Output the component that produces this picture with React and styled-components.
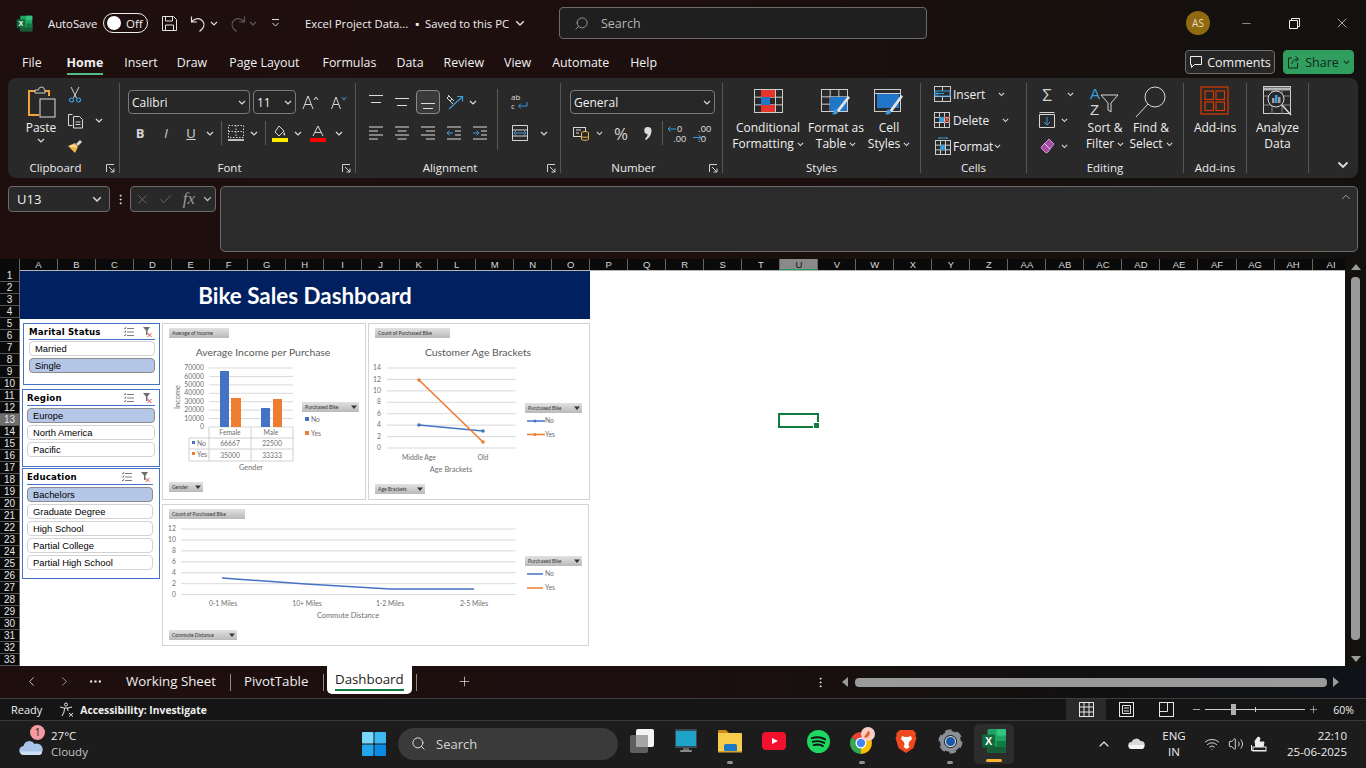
import React from "react";
import styled, { createGlobalStyle } from "styled-components";
import { Search, Minus, X, Check, Wifi, Volume2, ChevronUp, Plus, ChevronLeft, ChevronRight, MoreHorizontal, MoreVertical } from "lucide-react";

const UI = '"Open Sans", "Noto Sans", sans-serif';
const LINE = "#d4d4d4";
const BLUE = "#3b9bdc";

const GlobalStyle = createGlobalStyle`
  html, body { margin: 0; padding: 0; background: #111; overflow: hidden; }
  * { box-sizing: border-box; }
  svg { flex: none; overflow: visible; }
`;

const Page = styled.div`
  width: 1366px;
  height: 768px;
  display: flex;
  flex-direction: column;
  overflow: hidden;
  font-family: ${UI};
  color: #f0f0f0;
  background: linear-gradient(90deg, #1f0e0e, #1e0f0f 45%, #17100d 75%, #13110f);
`;

/* title bar */
const TitleBar = styled.div`
  height: 46px;
  flex: none;
  display: flex;
  align-items: center;
  padding-left: 16px;
`;
const BarText = styled.span`
  flex: none;
  width: ${(p) => p.$w}px;
  font-size: 11.3px;
  white-space: nowrap;
  margin-left: ${(p) => p.$ml || 0}px;
`;
const Toggle = styled.div`
  width: 45px;
  height: 20px;
  flex: none;
  border: 1px solid #eee;
  border-radius: 10px;
  display: flex;
  align-items: center;
  padding-left: 3px;
  gap: 5px;
  font-size: 11.5px;
  &::before {
    content: "";
    width: 14px;
    height: 14px;
    border-radius: 50%;
    background: #fff;
  }
`;
const Slot = styled.div`
  width: ${(p) => p.$w}px;
  height: ${(p) => p.$h || 22}px;
  flex: none;
  display: flex;
  align-items: center;
  justify-content: center;
  padding-right: ${(p) => p.$pr || 0}px;
  color: ${(p) => p.$color || LINE};
  font-size: ${(p) => p.$size || 12}px;
`;
const SearchBox = styled.div`
  width: 368px;
  height: 32px;
  margin-left: 29px;
  flex: none;
  display: flex;
  align-items: center;
  padding-left: 14px;
  gap: 12px;
  background: #1f1f1f;
  border: 1px solid #6b6b6b;
  border-radius: 4px;
  font-size: 12.5px;
  color: #b5b5b5;
`;
const Avatar = styled.div`
  width: 24px;
  height: 24px;
  margin-left: 259px;
  flex: none;
  border-radius: 50%;
  background: #8f6a10;
  color: #e8dcc0;
  font-size: 10px;
  display: flex;
  align-items: center;
  justify-content: center;
`;
const WindowButtons = styled.div`
  display: flex;
  margin-left: 12px;
`;

/* tabs row */
const TabRow = styled.div`
  height: 32px;
  flex: none;
  display: flex;
  align-items: center;
  padding: 0 12px 0 22px;
`;
const MenuTab = styled.div`
  position: relative;
  margin-right: ${(p) => p.$mr}px;
  font-size: 12.4px;
  font-weight: ${(p) => (p.$active ? 700 : 400)};
  white-space: nowrap;
  ${(p) =>
    p.$active &&
    `&::after {
      content: "";
      position: absolute;
      left: 0;
      right: 0;
      bottom: -4px;
      height: 2px;
      background: #4fbd86;
    }`}
`;
const RowActions = styled.div`
  margin-left: auto;
  display: flex;
  gap: 8px;
`;
const CommentsButton = styled.div`
  width: 90px;
  height: 24px;
  display: flex;
  align-items: center;
  justify-content: center;
  gap: 4px;
  font-size: 12.5px;
  background: #262626;
  border: 1px solid #6f6f6f;
  border-radius: 4px;
`;
const ShareButton = styled(CommentsButton)`
  width: 71px;
  background: #2f9e5f;
  border-color: #2f9e5f;
  color: #10291b;
`;

/* ribbon */
const Ribbon = styled.div`
  height: 100px;
  flex: none;
  margin: 0 8px;
  padding: 5px 0;
  display: flex;
  background: #292929;
  border-radius: 8px;
`;
const Group = styled.div`
  position: relative;
  width: ${(p) => p.$w}px;
  flex: none;
  display: flex;
  flex-direction: column;
  border-right: 1px solid #555;
`;
const GroupBody = styled.div`
  flex: 1;
  min-height: 0;
  display: flex;
  padding-left: ${(p) => p.$pl || 0}px;
  justify-content: ${(p) => (p.$center ? "center" : "flex-start")};
`;
const GroupLabel = styled.div`
  height: 20px;
  margin-bottom: -5px;
  padding-right: ${(p) => (p.$launch ? 16 : 0)}px;
  font-size: 11.5px;
  text-align: center;
  line-height: 20px;
  color: #ececec;
`;
const Launcher = styled.svg`
  position: absolute;
  right: 4px;
  bottom: 0;
  width: 9px;
  height: 9px;
`;
const Stack = styled.div`
  display: flex;
  flex-direction: column;
  padding-top: ${(p) => p.$top || 0}px;
  gap: ${(p) => p.$gap || 0}px;
`;
const Row = styled.div`
  display: flex;
  align-items: center;
  height: ${(p) => p.$h || 24}px;
`;
const Select = styled.div`
  width: ${(p) => p.$w}px;
  height: 24px;
  margin-left: ${(p) => p.$ml || 0}px;
  padding: 0 3px;
  display: flex;
  align-items: center;
  justify-content: space-between;
  background: #262626;
  border: 1px solid #7a7a7a;
  border-radius: 4px;
  font-size: 12px;
`;
const Divider = styled.div`
  width: 1px;
  height: ${(p) => p.$h || 24}px;
  background: #5a5a5a;
  margin: 0 ${(p) => p.$mx || 2}px;
  flex: none;
`;
const PickedSlot = styled(Slot)`
  border: 1px solid #8a8a8a;
  border-radius: 4px;
  background: #3a3a3a;
  margin: 0 1px;
`;
const PasteButton = styled.div`
  width: 42px;
  margin-left: 12px;
  padding-top: 4px;
  display: flex;
  flex-direction: column;
  align-items: center;
  font-size: 12px;
  line-height: 20px;
`;
const BigButton = styled.div`
  width: ${(p) => p.$w}px;
  flex: none;
  margin-left: ${(p) => p.$ml || 0}px;
  margin-right: ${(p) => p.$mr || 0}px;
  display: flex;
  flex-direction: column;
  align-items: center;
  padding-top: ${(p) => p.$top ?? 6}px;
  white-space: nowrap;
`;
const BigIcon = styled.div`
  height: ${(p) => p.$h || 31}px;
  flex: none;
`;
const BigLine = styled.div`
  height: 16px;
  line-height: 16px;
  font-size: 12px;
  display: flex;
  align-items: center;
  gap: 3px;
`;
const CellLabel = styled.span`
  width: ${(p) => p.$w}px;
  font-size: 12px;
  flex: none;
`;
const RibbonCollapse = styled.div`
  flex: 1;
  display: flex;
  align-items: flex-end;
  justify-content: flex-end;
  padding: 0 9px 5px 0;
`;

/* formula bar */
const FormulaBar = styled.div`
  height: 81px;
  flex: none;
  padding: 8px 8px 7px;
  display: flex;
`;
const NameBox = styled.div`
  width: 102px;
  height: 26px;
  flex: none;
  padding: 0 7px 0 8px;
  display: flex;
  align-items: center;
  justify-content: space-between;
  background: #292929;
  border: 1px solid #6b6b6b;
  border-radius: 4px;
  font-size: 13px;
`;
const FxBox = styled.div`
  width: 86px;
  height: 26px;
  flex: none;
  display: flex;
  align-items: center;
  background: #292929;
  border: 1px solid #6b6b6b;
  border-radius: 4px;
`;
const FxGlyph = styled.span`
  font-family: "Liberation Serif", serif;
  font-style: italic;
  font-size: 17px;
  color: #9a9a9a;
`;
const FormulaInput = styled.div`
  flex: 1;
  margin-left: 4px;
  background: #2b2b2b;
  border: 1px solid #6b6b6b;
  border-radius: 5px;
  display: flex;
  justify-content: flex-end;
  padding: 2px 1px 0 0;
`;

/* sheet */
const SheetArea = styled.div`
  height: 407px;
  flex: none;
  display: flex;
`;
const SheetPane = styled.div`
  width: 1345px;
  flex: none;
  display: flex;
  flex-direction: column;
`;
const ColumnRow = styled.div`
  height: 11px;
  flex: none;
  display: grid;
  grid-template-columns: 20px repeat(35, 38.02px);
  background: #0a0a0a;
  overflow: hidden;
`;
const HeaderCell = styled.div`
  font-family: "Liberation Sans", sans-serif;
  font-size: 9.5px;
  line-height: 11px;
  text-align: center;
  color: ${(p) => (p.$active ? "#111" : "#d9d9d9")};
  background: ${(p) => (p.$active ? "#8a8a8a" : "#0a0a0a")};
  border-right: 1px solid #666;
  box-shadow: ${(p) => (p.$active ? "inset 0 -1px 0 #1f9d5c" : "none")};
`;
const Corner = styled(HeaderCell)`
  background: #0a0a0a;
`;
const SheetBody = styled.div`
  height: 396px;
  display: flex;
  border-top: 1px solid #b5b5b5;
`;
const RowHeaders = styled.div`
  width: 20px;
  flex: none;
  display: grid;
  grid-auto-rows: 12px;
  background: #0a0a0a;
  border-right: 1px solid #666;
  margin-top: -1px;
`;
const RowCell = styled.div`
  font-family: "Liberation Sans", sans-serif;
  font-size: 10px;
  line-height: 12px;
  text-align: center;
  color: #e4e4e4;
  background: ${(p) => (p.$active ? "#6d6d6d" : "#0a0a0a")};
  border-bottom: 1px solid #555;
`;
const Canvas = styled.div`
  position: relative;
  flex: 1;
  background: #fff;
`;
const CellCursor = styled.div`
  position: absolute;
  left: 758px;
  top: 142px;
  width: 41px;
  height: 15px;
  border: 2px solid #107c41;
  &::after {
    content: "";
    position: absolute;
    right: -3px;
    bottom: -3px;
    width: 5px;
    height: 5px;
    background: #107c41;
    border: 1px solid #fff;
  }
`;
const Dashboard = styled.div`
  width: 570px;
`;
const Banner = styled.div`
  height: 48px;
  background: #002060;
  color: #fff;
  font-family: Lato, sans-serif;
  font-weight: 700;
  font-size: 22.4px;
  display: flex;
  align-items: center;
  justify-content: center;
`;
const DashBody = styled.div`
  display: grid;
  grid-template-columns: 140px 1fr;
  column-gap: 2px;
  padding: 4px 0 0 0;
`;
const SlicerColumn = styled.div`
  padding-left: 2px;
  display: flex;
  flex-direction: column;
`;
const Slicer = styled.div`
  width: ${(p) => p.$w}px;
  height: ${(p) => p.$h}px;
  margin: ${(p) => p.$mt || 0}px 0 0 ${(p) => p.$ml || 0}px;
  padding: 0 ${(p) => p.$r}px 0 ${(p) => p.$l}px;
  border: 1px solid #4472c4;
  background: #fff;
`;
const SlicerHead = styled.div`
  height: 16px;
  display: flex;
  align-items: center;
  border-bottom: 1px solid #4472c4;
  color: #000;
  font-family: "DejaVu Sans", sans-serif;
  font-weight: 700;
  font-size: 8.6px;
  letter-spacing: 0.2px;
`;
const SlicerTools = styled.div`
  margin-left: auto;
  display: flex;
  gap: 9px;
  margin-right: 3px;
`;
const SlicerList = styled.div`
  margin-top: ${(p) => p.$top}px;
  display: flex;
  flex-direction: column;
  gap: 2px;
`;
const SlicerItem = styled.div`
  height: 15px;
  padding-left: 5px;
  font-family: "Liberation Sans", sans-serif;
  font-size: 9.4px;
  line-height: 13px;
  color: #000;
  background: ${(p) => (p.$on ? "#b4c7e7" : "#fff")};
  border: 1px solid ${(p) => (p.$on ? "#8c8c8c" : "#d2d2d2")};
  border-radius: 4px;
`;
const ChartGrid = styled.div`
  display: grid;
  grid-template-columns: 204px 222px;
  grid-template-rows: 177px 142px;
  column-gap: 2px;
  row-gap: 4px;
`;
const Card = styled.div`
  grid-column: ${(p) => (p.$wide ? "1 / 3" : "auto")};
  border: 1px solid #d4d4d4;
  background: #fff;
  overflow: hidden;
  width: ${(p) => p.$w}px;
`;
const ChartSvg = styled.svg`
  display: block;
  font-family: Lato, sans-serif;
`;
const ChartTitle = styled.text`
  font-size: 10.4px;
  fill: #595959;
  text-anchor: middle;
`;
const AxisText = styled.text`
  font-size: 6.8px;
  fill: #6f6f6f;
  text-anchor: ${(p) => p.$anchor || "middle"};
`;
const AxisTitle = styled.text`
  font-size: 7.4px;
  fill: #6f6f6f;
  text-anchor: middle;
`;
const FieldText = styled.text`
  font-size: 5px;
  fill: #333;
`;

/* sheet tabs */
const SheetTabs = styled.div`
  height: 32px;
  flex: none;
  display: flex;
  align-items: flex-start;
  padding-left: 15px;
  background: linear-gradient(90deg, #1f0e0e, #1d0f0f 45%, #12100f 75%, #0f1218);
`;
const Tab = styled.div`
  width: ${(p) => p.$w}px;
  height: 28px;
  flex: none;
  padding-left: ${(p) => p.$pl}px;
  font-size: 13.3px;
  line-height: 30px;
  white-space: nowrap;
  display: flex;
`;
const ActiveTab = styled.div`
  position: relative;
  width: 85px;
  height: 28px;
  flex: none;
  margin-left: 3px;
  padding-left: 8px;
  background: #fff;
  color: #222;
  font-size: 13.3px;
  line-height: 26px;
  border-radius: 0 0 5px 5px;
  &::after {
    content: "";
    position: absolute;
    left: 8px;
    width: 69px;
    top: 23px;
    height: 2px;
    background: #107c41;
  }
`;
const TabRule = styled.div`
  width: 1px;
  height: 17px;
  margin-top: 8px;
  flex: none;
  background: #8a8a8a;
`;
const HScroll = styled.div`
  margin-left: auto;
  display: flex;
  align-items: center;
  height: 32px;
  padding-right: 21px;
`;
const HThumb = styled.div`
  width: 472px;
  height: 9px;
  margin: 0 6px 0 3px;
  background: #9a9a9a;
  border-radius: 4px;
`;
const Triangle = styled.div`
  width: 0;
  height: 0;
  ${(p) =>
    p.$dir === "left"
      ? "border-right: 6px solid #9a9a9a; border-top: 5px solid transparent; border-bottom: 5px solid transparent;"
      : p.$dir === "right"
      ? "border-left: 6px solid #9a9a9a; border-top: 5px solid transparent; border-bottom: 5px solid transparent;"
      : p.$dir === "up"
      ? "border-bottom: 6px solid #9a9a9a; border-left: 5px solid transparent; border-right: 5px solid transparent;"
      : "border-top: 6px solid #9a9a9a; border-left: 5px solid transparent; border-right: 5px solid transparent;"}
`;
const VScroll = styled.div`
  width: 21px;
  flex: none;
  display: flex;
  flex-direction: column;
  align-items: center;
  padding-top: 5px;
`;
const VThumb = styled.div`
  width: 9px;
  height: 363px;
  margin: 7px 0 16px;
  background: #9a9a9a;
  border-radius: 4px;
`;

/* status bar */
const StatusBar = styled.div`
  height: 22px;
  flex: none;
  display: flex;
  align-items: center;
  padding-left: 11px;
  background: #151515;
  border-top: 1px solid #3c3c3c;
  font-size: 11px;
`;
const StatusStrong = styled.span`
  font-weight: 700;
  margin-left: 5px;
  font-size: 10.3px;
`;
const ViewButtons = styled.div`
  margin-left: auto;
  height: 21px;
  display: flex;
  align-items: center;
`;
const ViewButton = styled.div`
  width: 40px;
  height: 21px;
  display: flex;
  align-items: center;
  justify-content: center;
  background: ${(p) => (p.$on ? "#2a2a2a" : "transparent")};
`;
const ZoomTrack = styled.div`
  position: relative;
  width: 100px;
  height: 1px;
  background: #cfcfcf;
  &::before {
    content: "";
    position: absolute;
    left: 26px;
    top: -5px;
    width: 5px;
    height: 11px;
    background: #b0b0b0;
  }
  &::after {
    content: "";
    position: absolute;
    left: 50px;
    top: -2px;
    width: 1px;
    height: 5px;
    background: #cfcfcf;
  }
`;

/* taskbar */
const Taskbar = styled.div`
  height: 48px;
  flex: none;
  display: flex;
  align-items: center;
  padding-bottom: 2px;
  background: #1c1c1c;
  border-top: 1px solid #3a3a3a;
`;
const Weather = styled.div`
  width: 356px;
  flex: none;
  padding-left: 19px;
  display: flex;
  align-items: center;
  gap: 8px;
`;
const WeatherIcon = styled.div`
  position: relative;
  width: 24px;
  height: 18px;
  margin-top: 6px;
`;
const WeatherBadge = styled.div`
  position: absolute;
  left: 11px;
  top: -13px;
  width: 15px;
  height: 15px;
  border-radius: 50%;
  background: #f49aa0;
  color: #2a1a1a;
  font-size: 10px;
  line-height: 15px;
  text-align: center;
`;
const TwoLines = styled.div`
  font-size: 11.5px;
  line-height: 16px;
  color: ${(p) => p.$color || "#eee"};
  text-align: ${(p) => p.$align || "left"};
  width: ${(p) => (p.$w ? `${p.$w}px` : "auto")};
`;
const Dim = styled.div`
  color: #c4c4c4;
`;
const TaskSearch = styled.div`
  width: 220px;
  height: 32px;
  margin-left: 6px;
  flex: none;
  display: flex;
  align-items: center;
  gap: 10px;
  padding-left: 13px;
  background: #3a3a3a;
  border-radius: 16px;
  font-size: 13px;
  color: #d4d4d4;
`;
const Apps = styled.div`
  display: flex;
  margin-left: 2px;
`;
const AppSlot = styled.div`
  position: relative;
  width: 44px;
  height: 40px;
  display: flex;
  align-items: center;
  justify-content: center;
  ${(p) =>
    p.$open &&
    `&::before {
      content: "";
      position: absolute;
      left: 2px;
      right: 2px;
      top: 0;
      bottom: 0;
      background: #2c2c2c;
      border-radius: 5px;
    }`}
  & > svg {
    position: relative;
    margin-top: -5px;
  }
  ${(p) =>
    p.$dot &&
    `&::after {
      content: "";
      position: absolute;
      left: 19px;
      bottom: 0px;
      width: 6px;
      height: 3px;
      border-radius: 2px;
      background: #8f8f8f;
    }`}
  ${(p) =>
    p.$open &&
    `&::after {
      content: "";
      position: absolute;
      left: 14px;
      bottom: 2px;
      width: 16px;
      height: 3px;
      border-radius: 2px;
      background: #f5b32f;
    }`}
`;
const Tray = styled.div`
  margin-left: auto;
  display: flex;
  align-items: center;
  padding-right: 19px;
`;

/* small drawings */
const Chevron = ({ size = 8, color = "#dcdcdc" }) => (
  <svg width={size} height={size * 0.625} viewBox="0 0 8 5" fill="none" stroke={color} strokeWidth="1.2">
    <path d="M1 1l3 3 3-3" />
  </svg>
);
const LaunchMark = () => (
  <Launcher viewBox="0 0 9 9" fill="none" stroke="#cfcfcf" strokeWidth="1">
    <path d="M.5 8V.5H8M3 3l5 5M8 4.5V8H4.5" />
  </Launcher>
);
const ExcelLogo = ({ size = 16 }) => (
  <svg width={size} height={size} viewBox="0 0 24 24">
    <rect x="6" y="1" width="17" height="22" rx="1.5" fill="#21a366" />
    <rect x="14.5" y="1" width="8.5" height="6" fill="#33c481" />
    <rect x="14.5" y="12" width="8.5" height="5.5" fill="#107c41" />
    <rect x="6" y="17.5" width="17" height="5.5" fill="#185c37" />
    <rect x="1" y="6" width="12" height="12" rx="1.2" fill="#0f6b3a" />
    <text x="7" y="15.5" fontSize="10" fontWeight="700" textAnchor="middle" fill="#fff" fontFamily="Liberation Sans">X</text>
  </svg>
);
const SaveIcon = () => (
  <svg width="17" height="17" viewBox="0 0 17 17" fill="none" stroke="#e4e4e4">
    <path d="M1.5 1.5h11l3 3v11h-14zM4.5 1.5v4.5h7v-4.5M4.5 15.5v-5.5h8v5.5" />
  </svg>
);
const UndoIcon = ({ dim }) => (
  <svg width="16" height="17" viewBox="0 0 16 17" fill="none" stroke={dim ? "#5a5a5a" : "#e4e4e4"} strokeWidth="1.2" style={dim ? { transform: "scaleX(-1)" } : undefined}>
    <path d="M1.5 1.5v5.5h5.5M1.5 7c3-3.5 7-4 10-2 3 2.5 3 6 1 8.5l-3 3" />
  </svg>
);
const ClipboardIcon = () => (
  <svg width="29" height="31" viewBox="0 0 29 31" fill="none">
    <path d="M8 4H2v24h10" stroke="#f2a33a" strokeWidth="2" />
    <path d="M17 4h5v5" stroke="#f2a33a" strokeWidth="2" />
    <path d="M8 6V3h3.5a3 3 0 0 1 6 0H18v3z" fill="#292929" stroke="#cfcfcf" />
    <rect x="13" y="12" width="15" height="18" fill="#292929" stroke="#dedede" />
  </svg>
);
const ScissorsIcon = () => (
  <svg width="14" height="17" viewBox="0 0 14 17" fill="none">
    <path d="M3 1l5.5 11M11 1L5.5 12" stroke="#d8d8d8" />
    <circle cx="3.5" cy="14" r="2" stroke={BLUE} strokeWidth="1.2" />
    <circle cx="10.5" cy="14" r="2" stroke={BLUE} strokeWidth="1.2" />
  </svg>
);
const CopyIcon = () => (
  <svg width="17" height="17" viewBox="0 0 17 17" fill="none" stroke="#d8d8d8">
    <path d="M5.5 2.5h-4v11h4M6.5 4.5h6l3 3v8.5h-9zM8.5 10h5M8.5 12.5h5" />
  </svg>
);
const BrushIcon = () => (
  <svg width="16" height="16" viewBox="0 0 16 16">
    <path d="M9 6l4-4 2 2-4 4z" fill="#d8d8d8" />
    <path d="M1 8l7-3 3 4-3 6z" fill="#f2b84b" />
    <path d="M3.5 8l6 0" stroke="#fff" />
  </svg>
);
const GrowFont = ({ up }) => (
  <svg width="17" height="15" viewBox="0 0 17 15" fill="none">
    <path d={up ? "M1 14L6 1l5 13M3 9.5h6" : "M1.5 14l4.5-12 4.5 12M3.5 9.5h5"} stroke="#d8d8d8" />
    <path d={up ? "M12 5l2-3 2 3" : "M12 2l2 3 2-3"} stroke={up ? "#d8d8d8" : BLUE} />
  </svg>
);
const Lines = ({ kind }) => {
  const rows = {
    top: "M1 1.5h14M3 8.5h10",
    middle: "M1 4.5h14M3 11.5h10",
    bottom: "M1 9.5h14M3 14.5h10",
    left: "M1 2h14M1 6h9M1 10h14M1 14h9",
    center: "M1 2h14M3.5 6h9M1 10h14M3.5 14h9",
    right: "M1 2h14M6 6h9M1 10h14M6 14h9",
  };
  return (
    <svg width="16" height="16" viewBox="0 0 16 16" fill="none" stroke="#dcdcdc">
      <path d={rows[kind]} />
    </svg>
  );
};
const IndentIcon = ({ out }) => (
  <svg width="16" height="16" viewBox="0 0 16 16" fill="none">
    <path d="M1 2h14M9 6h6M9 10h6M1 14h14" stroke="#dcdcdc" />
    <path d={out ? "M7 8H1M3.5 5.5L1 8l2.5 2.5" : "M1 8h6M4.5 5.5L7 8l-2.5 2.5"} stroke={BLUE} />
  </svg>
);
const OrientationIcon = () => (
  <svg width="18" height="17" viewBox="0 0 18 17" fill="none">
    <path d="M2 1l6 6M1 4l6 6M3 2l-2 2M6 5L4 7" stroke="#d8d8d8" />
    <path d="M3 15L16 3M11 2.5h5.5v5" stroke={BLUE} strokeWidth="1.2" />
  </svg>
);
const WrapIcon = () => (
  <svg width="18" height="18" viewBox="0 0 18 18" fill="none">
    <text x="0" y="7" fontSize="8" fill="#dcdcdc" fontFamily="Open Sans">ab</text>
    <text x="0" y="16" fontSize="8" fill="#dcdcdc" fontFamily="Open Sans">c</text>
    <path d="M16 9v4h-8M10 10.5L7.5 13l2.5 2.5" stroke={BLUE} />
  </svg>
);
const MergeIcon = () => (
  <svg width="16" height="16" viewBox="0 0 16 16" fill="none">
    <path d="M.5.5h15v15H.5zM.5 5h15M.5 11h15" stroke="#d8d8d8" />
    <path d="M2 8h12M4 6l-2 2 2 2M12 6l2 2-2 2" stroke={BLUE} />
  </svg>
);
const BorderIcon = () => (
  <svg width="16" height="16" viewBox="0 0 16 16" fill="none">
    <path d="M.5.5h15v12H.5zM.5 6.5h15M8 .5v12" stroke="#cfcfcf" strokeDasharray="1.5 1.5" />
    <path d="M0 15h16" stroke="#f2f2f2" strokeWidth="1.5" />
  </svg>
);
const FillIcon = () => (
  <svg width="17" height="17" viewBox="0 0 17 17" fill="none">
    <path d="M7 1l5 5-5 5-4-4z" stroke="#d8d8d8" />
    <path d="M12 7c1.5 1.5 1.5 3 .5 3.5S11 9.5 12 7z" fill="#d8d8d8" />
    <rect x="0" y="13" width="16" height="4" fill="#ffeb00" />
  </svg>
);
const FontColorIcon = () => (
  <svg width="17" height="17" viewBox="0 0 17 17" fill="none">
    <path d="M3 11L8 1l5 10M5 7.5h6" stroke="#d8d8d8" />
    <rect x="0" y="13" width="16" height="4" fill="#ff0000" />
  </svg>
);
const CommaIcon = () => (
  <svg width="8" height="13" viewBox="0 0 8 13">
    <path d="M4 0a3.5 3.5 0 0 1 3.5 3.5C7.500 8 5 11 2 13L1 12c1.500-1.500 2.500-3 2.500-5A3.5 3.5 0 0 1 4 0z" fill="#dcdcdc" />
  </svg>
);
const AccountingIcon = () => (
  <svg width="17" height="15" viewBox="0 0 17 15" fill="none">
    <rect x=".5" y="1.5" width="12" height="9" stroke="#d8d8d8" />
    <path d="M3 4h5M3 7h3" stroke="#d8d8d8" />
    <ellipse cx="12" cy="7" rx="3.5" ry="1.5" fill="#292929" stroke="#f2b84b" />
    <path d="M8.5 7v6.5c0 1 7 1 7 0V7" fill="#292929" stroke="#f2b84b" />
    <path d="M8.5 10.5c0 1 7 1 7 0" stroke="#f2b84b" />
  </svg>
);
const DecimalIcon = ({ more }) => (
  <svg width="20" height="19" viewBox="0 0 20 19" fill="none">
    <text x={more ? 10 : 6} y="8" fontSize="9.5" fill="#d8d8d8" fontFamily="Liberation Sans">{more ? "0" : ".00"}</text>
    <text x="6" y="18" fontSize="9.5" fill="#d8d8d8" fontFamily="Liberation Sans">{more ? ".00" : ".0"}</text>
    <path d={more ? "M1 5h8M3.5 2.5L1 5l2.5 2.5" : "M1 13.5h8M6.5 11L9 13.5 6.5 16"} stroke={BLUE} />
  </svg>
);
const Grid = ({ x, y, w, h, cols, rows }) => (
  <g stroke="#cdcdcd" fill="none">
    <rect x={x + 0.5} y={y + 0.5} width={w} height={h} />
    {Array.from({ length: cols - 1 }, (_, i) => (
      <path key={i} d={`M${x + 0.5 + ((i + 1) * w) / cols} ${y}v${h}`} />
    ))}
    {Array.from({ length: rows - 1 }, (_, i) => (
      <path key={i} d={`M${x} ${y + 0.5 + ((i + 1) * h) / rows}h${w}`} />
    ))}
  </g>
);
const ConditionalIcon = () => (
  <svg width="29" height="24" viewBox="0 0 29 24">
    <Grid x={0} y={0} w={28} h={23} cols={4} rows={3} />
    <rect x="7" y="1" width="14" height="7" fill="#e5342a" />
    <rect x="7" y="16" width="14" height="7" fill="#e5342a" />
    <rect x="7" y="8" width="9" height="8" fill="#2176c9" />
  </svg>
);
const TableIcon = () => (
  <svg width="30" height="26" viewBox="0 0 30 26">
    <Grid x={0} y={0} w={26} h={22} cols={3} rows={3} />
    <rect x="9" y="8" width="17" height="14" fill="#2176c9" />
    <path d="M15 22L27 7l2 1.5L18 23z" fill="#e4e4e4" />
    <path d="M13 21c2-1 4 0 4 2s-3 3-6 2c1-1 2-2 2-4z" fill="#3b9bdc" />
  </svg>
);
const CellStyleIcon = () => (
  <svg width="30" height="26" viewBox="0 0 30 26">
    <rect x=".5" y=".5" width="26" height="22" fill="none" stroke="#cdcdcd" />
    <path d="M.5 4.5h26" stroke="#cdcdcd" />
    <rect x="3" y="5" width="22" height="14" fill="#2176c9" />
    <path d="M15 22L27 6l2 1.5L18 23z" fill="#e4e4e4" />
    <path d="M13 21c2-1 4 0 4 2s-3 3-6 2c1-1 2-2 2-4z" fill="#3b9bdc" />
  </svg>
);
const InsertCellsIcon = () => (
  <svg width="17" height="16" viewBox="0 0 17 16">
    <Grid x={0} y={0} w={16} h={15} cols={2} rows={3} />
    <rect x="1" y="5" width="15" height="5" fill="#292929" stroke={BLUE} />
    <path d="M10 7.5H2M4 5.5l-2 2 2 2" stroke={BLUE} fill="none" />
  </svg>
);
const DeleteCellsIcon = () => (
  <svg width="17" height="16" viewBox="0 0 17 16">
    <Grid x={0} y={0} w={15} h={15} cols={3} rows={3} />
    <rect x="5" y="5" width="5" height="5" fill="#3b9bdc" />
    <path d="M10.5 4.5l5 6M15.5 4.5l-5 6" stroke="#e5534b" strokeWidth="1.3" />
  </svg>
);
const FormatCellsIcon = () => (
  <svg width="17" height="18" viewBox="0 0 17 18">
    <Grid x={1} y={3} w={15} h={14} cols={3} rows={3} />
    <rect x="6" y="8" width="5" height="5" fill="#3b9bdc" />
    <path d="M5 1h8M5 0v2M13 0v2" stroke={BLUE} />
  </svg>
);
const FillDownIcon = () => (
  <svg width="16" height="16" viewBox="0 0 16 16" fill="none">
    <path d="M.5 2.5h15v13H.5zM.5 .5h15" stroke="#d8d8d8" />
    <path d="M8 5v8M5 10l3 3 3-3" stroke={BLUE} />
  </svg>
);
const EraserIcon = () => (
  <svg width="16" height="16" viewBox="0 0 16 16">
    <path d="M10 1l5 5-6 8-2 1-5-5 1-2z" fill="#a64ea6" stroke="#d48fd4" />
    <path d="M5 5l6 6" stroke="#d8d8d8" />
  </svg>
);
const SortIcon = () => (
  <svg width="30" height="30" viewBox="0 0 30 30" fill="none">
    <text x="0" y="13" fontSize="15" fill={BLUE} fontFamily="Liberation Sans">A</text>
    <text x="0" y="29" fontSize="15" fill="#d8d8d8" fontFamily="Liberation Sans">Z</text>
    <path d="M11 9h17l-7 8v9l-3-2v-7z" stroke="#d8d8d8" />
  </svg>
);
const FindIcon = () => (
  <svg width="32" height="32" viewBox="0 0 32 32" fill="none" stroke="#d8d8d8">
    <circle cx="20" cy="11" r="10" />
    <path d="M13 18L1 31" />
  </svg>
);
const AddinsIcon = () => (
  <svg width="30" height="30" viewBox="0 0 30 30" fill="none" stroke="#d83b01" strokeWidth="1.2">
    <rect x="1" y="1" width="27" height="27" />
    <rect x="5" y="5" width="8.5" height="8.5" />
    <rect x="16" y="5" width="8.5" height="8.5" />
    <rect x="5" y="16" width="8.5" height="8.5" />
    <rect x="16" y="16" width="8.5" height="8.5" />
  </svg>
);
const AnalyzeIcon = () => (
  <svg width="29" height="30" viewBox="0 0 29 30" fill="none">
    <rect x=".5" y=".5" width="27" height="27" stroke="#d0d0d0" />
    <path d="M.5 3h27" stroke="#b5b5b5" strokeWidth="3" />
    <path d="M.5 10h27M.5 19h27M9 3v25M19 3v25" stroke="#8a8a8a" />
    <circle cx="13" cy="13" r="8" fill="#292929" stroke="#d8d8d8" />
    <path d="M19 19l9 10" stroke="#d8d8d8" strokeWidth="1.5" />
    <rect x="9" y="12" width="2.5" height="5" fill="#a0a0a0" />
    <rect x="12" y="9" width="2.5" height="8" fill="#3b9bdc" />
    <rect x="15" y="11" width="2.5" height="6" fill="#a0a0a0" />
  </svg>
);
const CommentIcon = () => (
  <svg width="14" height="14" viewBox="0 0 14 14" fill="none" stroke="#eee">
    <path d="M1.5 1.5h11v8h-7l-3 3v-3h-1z" />
  </svg>
);
const ShareIcon = () => (
  <svg width="14" height="14" viewBox="0 0 14 14" fill="none" stroke="#10291b">
    <path d="M5 3H1.5v10h9V8M5 9c0-3.5 3-5 6-5M8.5 1.5L11.5 4 8.5 7" />
  </svg>
);
const MultiSelectIcon = () => (
  <svg width="10" height="10" viewBox="0 0 10 10" fill="none" stroke="#7d7d7d">
    <path d="M3 1.5h7M3 5h7M3 8.5h7M0 1l1 1 1-2M0 4.5l1 1 1-2M0 8l1 1 1-2" />
  </svg>
);
const ClearFilterIcon = () => (
  <svg width="9" height="10" viewBox="0 0 9 10">
    <path d="M0 0h7L4.5 3.5V8H3V3.5z" fill="#6d6d6d" />
    <path d="M4.5 6l4 4M8.5 6l-4 4" stroke="#d9534f" />
  </svg>
);
const AccessIcon = () => (
  <svg width="15" height="15" viewBox="0 0 15 15" fill="none" stroke="#e6e6e6">
    <circle cx="7" cy="2.5" r="1.5" />
    <path d="M1 5l4 1h4l4-1M5.5 6l-.5 4-2 4M8.5 6l.5 3M10 11l4 3.5M14 11l-4 3.5" />
  </svg>
);
const ViewIcon = ({ kind }) => (
  <svg width="15" height="15" viewBox="0 0 15 15" fill="none" stroke="#e6e6e6">
    <rect x=".5" y=".5" width="14" height="14" />
    {kind === "normal" && <path d="M5 .5v14M10 .5v14M.5 5h14M.5 10h14" />}
    {kind === "layout" && <path d="M3.5 3.5h8v8h-8zM5 6h5M5 9h5" />}
    {kind === "break" && <path d="M8.5 .5v9H.5" />}
  </svg>
);
const CloudIcon = () => (
  <svg width="24" height="18" viewBox="0 0 24 18">
    <path d="M5 17a4.5 4.5 0 0 1-.5-9 6 6 0 0 1 11-2 5 5 0 0 1 4.5 11z" fill="#a9c4ea" />
    <path d="M1 13.5h22v.5a3 3 0 0 1-3 3H5a4 4 0 0 1-4-3.5z" fill="#cfe0f5" />
  </svg>
);
const StartIcon = () => (
  <svg width="24" height="24" viewBox="0 0 24 24">
    <rect x="0" y="0" width="11.5" height="11.5" rx="1" fill="#78d6fb" />
    <rect x="12.5" y="0" width="11.5" height="11.5" rx="1" fill="#3cb7f2" />
    <rect x="0" y="12.5" width="11.5" height="11.5" rx="1" fill="#22a6ec" />
    <rect x="12.5" y="12.5" width="11.5" height="11.5" rx="1" fill="#0a8ae0" />
  </svg>
);
const TaskViewIcon = () => (
  <svg width="26" height="26" viewBox="0 0 26 26">
    <rect x="1" y="7" width="18" height="18" rx="2" fill="#5f5f5f" />
    <rect x="7" y="1" width="18" height="18" rx="2" fill="#f4f4f4" />
    <rect x="7" y="7" width="12" height="12" fill="#a6a6a6" />
  </svg>
);
const DesktopIcon = () => (
  <svg width="22" height="24" viewBox="0 0 22 24">
    <rect x="0" y="0" width="22" height="19" rx="1" fill="#3a4a55" />
    <rect x="1" y="2" width="20" height="15" fill="#1ea4c8" />
    <rect x="8" y="19" width="6" height="3" fill="#666" />
    <rect x="5" y="21" width="12" height="2" rx="1" fill="#888" />
  </svg>
);
const FolderIcon = () => (
  <svg width="24" height="24" viewBox="0 0 24 24">
    <path d="M0 2a1 1 0 0 1 1-1h7l3 3v4H0z" fill="#c78a12" />
    <rect x="0" y="4" width="24" height="19" rx="1" fill="#f6cc4c" />
    <rect x="6" y="15" width="13" height="8" rx="2" fill="#1a78c8" />
    <rect x="0" y="22" width="24" height="1.5" fill="#d8a52c" />
  </svg>
);
const YoutubeIcon = () => (
  <svg width="24" height="18" viewBox="0 0 24 18">
    <rect width="24" height="18" rx="4" fill="#f1112f" />
    <path d="M10 6l6 3-6 3z" fill="#fff" />
  </svg>
);
const SpotifyIcon = () => (
  <svg width="23" height="23" viewBox="0 0 24 24" fill="none">
    <circle cx="12" cy="12" r="12" fill="#1ed760" />
    <path d="M5 8.5c5-1.5 10-1 14 1.3M6 12.3c4.5-1.200 8.5-.8 12 1.200M7 15.800c3.5-1 7-.7 9.5 1" stroke="#111" strokeWidth="2" strokeLinecap="round" />
  </svg>
);
const ChromeIcon = () => (
  <svg width="26" height="26" viewBox="0 0 26 26">
    <g transform="translate(0 3)">
      <path d="M12 12L2.5 6.5A11 11 0 0 1 21.5 6.5Z" fill="#e94235" />
      <path d="M12 12L21.5 6.5A11 11 0 0 1 12 23Z" fill="#fbbc04" />
      <path d="M12 12L12 23A11 11 0 0 1 2.5 6.5Z" fill="#34a853" />
      <circle cx="12" cy="12" r="5.5" fill="#fff" />
      <circle cx="12" cy="12" r="4.2" fill="#4285f4" />
    </g>
    <circle cx="19" cy="6" r="7" fill="#f5cfc8" />
    <path d="M15 9l4-6 2 1-1 4-3 2z" fill="#e8632a" />
  </svg>
);
const BraveIcon = () => (
  <svg width="21" height="25" viewBox="0 0 21 25">
    <path d="M4 1h13l3 3-.5 3 1 2-3 10-7.5 5-7.5-5-3-10 1-2L.5 4z" fill="#f0481f" />
    <path d="M6 7l3 1h3l3-1 1 3-3 3-.5 3 1 2-3 2-3-2 1-2-.5-3-3-3z" fill="#fff" />
  </svg>
);
const GearIcon = () => (
  <svg width="25" height="25" viewBox="0 0 25 25" fill="none">
    <circle cx="12.5" cy="12.5" r="10" stroke="#8a8f96" strokeWidth="4" strokeDasharray="6 4.47" />
    <circle cx="12.5" cy="12.5" r="8.5" stroke="#8a8f96" strokeWidth="4" />
    <circle cx="12.5" cy="12.5" r="5.5" fill="#e6e6e6" />
    <circle cx="12.5" cy="12.5" r="4.5" fill="#1558a8" />
  </svg>
);
const TrayCloud = () => (
  <svg width="17" height="13" viewBox="0 0 17 13">
    <path d="M4 12a3.5 3.5 0 0 1-.5-7 5 5 0 0 1 9-1 4 4 0 0 1 .5 8z" fill="#d8d8d8" />
    <path d="M1 8h15v1.5a2.5 2.5 0 0 1-2.5 2.5H4a3 3 0 0 1-3-3z" fill="#f4f4f4" />
  </svg>
);
const BatteryLeaf = () => (
  <svg width="17" height="16" viewBox="0 0 17 16" fill="none" stroke="#eee">
    <path d="M4 5l3-4 2 1-1 4h5l-1 5-7 1z" fill="#eee" />
    <rect x="2" y="11" width="13" height="4" fill="#1c1c1c" />
    <path d="M.5 9v5.5h14" />
  </svg>
);

/* data */
const COLS = [..."ABCDEFGHIJKLMNOPQRSTUVWXYZ", "AA", "AB", "AC", "AD", "AE", "AF", "AG", "AH", "AI"];
const ROWS = Array.from({ length: 33 }, (_, i) => i + 1);
const SLICERS = [
  { title: "Marital Status", w: 137, h: 62, ml: 1, l: 5, r: 4, top: 1, items: [["Married"], ["Single", true]] },
  { title: "Region", w: 138, h: 78, mt: 4, l: 4, r: 4, top: 2, items: [["Europe", true], ["North America"], ["Pacific"]] },
  {
    title: "Education",
    w: 138,
    h: 111,
    mt: 1,
    l: 4,
    r: 6,
    top: 2,
    items: [["Bachelors", true], ["Graduate Degree"], ["High School"], ["Partial College"], ["Partial High School"]],
  },
];

/* chart parts, coordinates are page pixels so they read against the sheet */
const Field = ({ x, y, w, label, arrow }) => (
  <g>
    <defs>
      <linearGradient id="fieldFill" x1="0" y1="0" x2="0" y2="1">
        <stop offset="0" stopColor="#e2e2e2" />
        <stop offset="1" stopColor="#b9b9b9" />
      </linearGradient>
    </defs>
    <rect x={x} y={y} width={w} height="10" fill="url(#fieldFill)" />
    <FieldText x={x + 3} y={y + 6.8}>{label}</FieldText>
    {arrow && <path d={`M${x + w - 8} ${y + 3.5}h6l-3 3.5z`} fill="#333" />}
  </g>
);
const Gridlines = ({ x1, x2, ys }) => (
  <g stroke="#d9d9d9">
    {ys.map((y) => (
      <path key={y} d={`M${x1} ${y}H${x2}`} />
    ))}
  </g>
);
const ChartFrame = ({ x, y, w, h, wide, children }) => (
  <Card $w={w} $wide={wide}>
    <ChartSvg width={w - 2} height={h - 2} viewBox={`${x + 1} ${y + 1} ${w - 2} ${h - 2}`}>
      {children}
    </ChartSvg>
  </Card>
);

function IncomeChart() {
  const ticks = [70000, 60000, 50000, 40000, 30000, 20000, 10000, 0];
  const yOf = (i) => 368 + i * 8.43;
  return (
    <ChartFrame x={162} y={323} w={204} h={177}>
      <Field x={169} y={328} w={60} label="Average of Income" />
      <ChartTitle x={263} y={356}>Average Income per Purchase</ChartTitle>
      <Gridlines x1={209} x2={293} ys={ticks.map((_, i) => yOf(i))} />
      {ticks.map((t, i) => (
        <AxisText key={t} $anchor="end" x={204} y={yOf(i) + 2.2}>{t}</AxisText>
      ))}
      <AxisTitle transform="translate(180 397) rotate(-90)">Income</AxisTitle>
      <rect x="220" y="371" width="9" height="56" fill="#4472c4" />
      <rect x="231" y="398" width="10" height="29" fill="#ed7d31" />
      <rect x="261" y="408" width="9" height="19" fill="#4472c4" />
      <rect x="273" y="399" width="9" height="28" fill="#ed7d31" />
      <path d="M209 427v34M251 427v34M293 427v34M189 438v23M189 438h104M189 449h104M189 461h104" stroke="#d0d0d0" fill="none" />
      <AxisText x={230} y={435}>Female</AxisText>
      <AxisText x={271} y={435}>Male</AxisText>
      <rect x="192" y="441" width="3" height="3" fill="#4472c4" />
      <AxisText $anchor="start" x={197} y={446}>No</AxisText>
      <rect x="192" y="452" width="3" height="3" fill="#ed7d31" />
      <AxisText $anchor="start" x={197} y={457}>Yes</AxisText>
      <AxisText x={230} y={446}>66667</AxisText>
      <AxisText x={272} y={446}>22500</AxisText>
      <AxisText x={230} y={458}>35000</AxisText>
      <AxisText x={272} y={458}>33333</AxisText>
      <AxisTitle x={251} y={470}>Gender</AxisTitle>
      <Field x={169} y={482} w={34} label="Gender" arrow />
      <Field x={302} y={402} w={57} label="Purchased Bike" arrow />
      <rect x="305" y="417" width="4" height="4" fill="#4472c4" />
      <AxisText $anchor="start" x={311} y={422}>No</AxisText>
      <rect x="305" y="431" width="4" height="4" fill="#ed7d31" />
      <AxisText $anchor="start" x={311} y={436}>Yes</AxisText>
    </ChartFrame>
  );
}

function AgeChart() {
  const ticks = [14, 12, 10, 8, 6, 4, 2, 0];
  const yOf = (i) => 368 + i * 11.43;
  return (
    <ChartFrame x={368} y={323} w={222} h={177}>
      <Field x={375} y={328} w={75} label="Count of Purchased Bike" />
      <ChartTitle x={478} y={356}>Customer Age Brackets</ChartTitle>
      <Gridlines x1={387} x2={516} ys={ticks.map((_, i) => yOf(i))} />
      {ticks.map((t, i) => (
        <AxisText key={t} $anchor="end" x={381} y={yOf(i) + 2.2}>{t}</AxisText>
      ))}
      <path d="M419 425L483 431" stroke="#4472c4" strokeWidth="1.6" />
      <circle cx="419" cy="425" r="1.8" fill="#4472c4" />
      <circle cx="483" cy="431" r="1.8" fill="#4472c4" />
      <path d="M419 380L483 442" stroke="#ed7d31" strokeWidth="1.6" />
      <circle cx="419" cy="380" r="1.8" fill="#ed7d31" />
      <circle cx="483" cy="442" r="1.8" fill="#ed7d31" />
      <AxisText x={419} y={460}>Middle Age</AxisText>
      <AxisText x={483} y={460}>Old</AxisText>
      <AxisTitle x={451} y={472}>Age Brackets</AxisTitle>
      <Field x={375} y={484} w={50} label="Age Brackets" arrow />
      <Field x={525} y={403} w={57} label="Purchased Bike" arrow />
      <path d="M527 421h18" stroke="#4472c4" strokeWidth="1.5" />
      <circle cx="535" cy="421" r="1.5" fill="#4472c4" />
      <AxisText $anchor="start" x={545} y={423}>No</AxisText>
      <path d="M527 434.5h18" stroke="#ed7d31" strokeWidth="1.5" />
      <circle cx="535" cy="434.5" r="1.5" fill="#ed7d31" />
      <AxisText $anchor="start" x={545} y={436.5}>Yes</AxisText>
    </ChartFrame>
  );
}

function CommuteChart() {
  const ticks = [12, 10, 8, 6, 4, 2, 0];
  const yOf = (i) => 529 + i * 10.94;
  return (
    <ChartFrame x={162} y={504} w={427} h={142} wide>
      <Field x={169} y={509} w={76} label="Count of Purchased Bike" />
      <Gridlines x1={181} x2={516} ys={ticks.map((_, i) => yOf(i))} />
      {ticks.map((t, i) => (
        <AxisText key={t} $anchor="end" x={176} y={yOf(i) + 2.2}>{t}</AxisText>
      ))}
      <path d="M222 578L306 584 390 589H474" stroke="#4472c4" strokeWidth="1.6" fill="none" />
      {[["0-1 Miles", 223], ["10+ Miles", 307], ["1-2 Miles", 390], ["2-5 Miles", 474]].map(([t, x]) => (
        <AxisText key={t} x={x} y={606}>{t}</AxisText>
      ))}
      <AxisTitle x={348} y={618}>Commute Distance</AxisTitle>
      <Field x={169} y={630} w={68} label="Commute Distance" arrow />
      <Field x={525} y={556} w={57} label="Purchased Bike" arrow />
      <path d="M527 574h16" stroke="#4472c4" strokeWidth="1.5" />
      <AxisText $anchor="start" x={545} y={576}>No</AxisText>
      <path d="M527 588h16" stroke="#ed7d31" strokeWidth="1.5" />
      <AxisText $anchor="start" x={545} y={590}>Yes</AxisText>
    </ChartFrame>
  );
}

const MENU = [
  ["File", 25], ["Home", 21], ["Insert", 19], ["Draw", 22], ["Page Layout", 23], ["Formulas", 20], ["Data", 20], ["Review", 20], ["View", 21], ["Automate", 21], ["Help", 0],
];

export default function App() {
  return (
    <Page>
      <GlobalStyle />
      <TitleBar>
        <ExcelLogo size={17} />
        <BarText $ml={15} $w={55}>AutoSave</BarText>
        <Toggle>Off</Toggle>
        <Slot $w={42}><SaveIcon /></Slot>
        <UndoIcon />
        <Slot $w={24} $pr={8}><Chevron /></Slot>
        <UndoIcon dim />
        <Slot $w={14}><Chevron color="#5a5a5a" /></Slot>
        <Slot $w={30}><svg width="9" height="8" viewBox="0 0 9 8" fill="none" stroke="#ddd"><path d="M1 .5h7M1.5 4l3 3 3-3" /></svg></Slot>
        <BarText $ml={15} $w={110}>Excel Project Data...</BarText>
        <BarText $w={10}>▪</BarText>
        <BarText $w={85}>Saved to this PC</BarText>
        <Slot $w={20}><Chevron size={10} /></Slot>
        <SearchBox>
          <Search size={15} strokeWidth={1.2} style={{ transform: "scaleX(-1)" }} />
          Search
        </SearchBox>
        <Avatar>AS</Avatar>
        <WindowButtons>
          <Slot $w={48}><Minus size={13} strokeWidth={1} color="#eee" /></Slot>
          <Slot $w={48}><svg width="11" height="11" viewBox="0 0 11 11" fill="none" stroke="#eee"><path d="M.5 2.5h8v8h-8zM2.5 2.5v-2h8v8h-2" /></svg></Slot>
          <Slot $w={48}><X size={16} strokeWidth={1} color="#eee" /></Slot>
        </WindowButtons>
      </TitleBar>

      <TabRow>
        {MENU.map(([name, mr]) => (
          <MenuTab key={name} $mr={mr} $active={name === "Home"}>{name}</MenuTab>
        ))}
        <RowActions>
          <CommentsButton><CommentIcon />Comments</CommentsButton>
          <ShareButton><ShareIcon />Share<Chevron size={7} color="#10291b" /></ShareButton>
        </RowActions>
      </TabRow>

      <Ribbon>
        <Group $w={112}>
          <GroupBody>
            <PasteButton>
              <ClipboardIcon />
              <span>Paste</span>
              <Chevron />
            </PasteButton>
            <Stack $gap={4}>
              <Row $h={22}><Slot $w={26}><ScissorsIcon /></Slot></Row>
              <Row $h={22}><Slot $w={26}><CopyIcon /></Slot><Slot $w={22}><Chevron /></Slot></Row>
              <Row $h={22}><Slot $w={26}><BrushIcon /></Slot></Row>
            </Stack>
          </GroupBody>
          <GroupLabel $launch>Clipboard</GroupLabel>
          <LaunchMark />
        </Group>

        <Group $w={236}>
          <GroupBody $pl={8}>
            <Stack $top={7} $gap={7}>
              <Row>
                <Select $w={122}>Calibri<Chevron /></Select>
                <Select $w={43} $ml={3}>11<Chevron /></Select>
                <Slot $w={28}><GrowFont up /></Slot>
                <Slot $w={28}><GrowFont /></Slot>
              </Row>
              <Row>
                <Slot $w={24} $size={13}><b>B</b></Slot>
                <Slot $w={28} $size={13}><i>I</i></Slot>
                <Slot $w={22} $size={13}><u>U</u></Slot>
                <Slot $w={16}><Chevron /></Slot>
                <Divider $mx={3} />
                <Slot $w={21}><BorderIcon /></Slot>
                <Slot $w={16}><Chevron /></Slot>
                <Divider $mx={3} />
                <Slot $w={23}><FillIcon /></Slot>
                <Slot $w={12}><Chevron /></Slot>
                <Slot $w={28}><FontColorIcon /></Slot>
                <Slot $w={14}><Chevron /></Slot>
              </Row>
            </Stack>
          </GroupBody>
          <GroupLabel $launch>Font</GroupLabel>
          <LaunchMark />
        </Group>

        <Group $w={205}>
          <GroupBody $pl={7}>
            <Stack $top={7} $gap={7}>
              <Row>
                <Slot $w={26}><Lines kind="top" /></Slot>
                <Slot $w={26}><Lines kind="middle" /></Slot>
                <PickedSlot $w={24} $h={24}><Lines kind="bottom" /></PickedSlot>
                <Slot $w={28}><OrientationIcon /></Slot>
                <Slot $w={8}><Chevron /></Slot>
              </Row>
              <Row>
                <Slot $w={26}><Lines kind="left" /></Slot>
                <Slot $w={26}><Lines kind="center" /></Slot>
                <Slot $w={26}><Lines kind="right" /></Slot>
                <Slot $w={26}><IndentIcon out /></Slot>
                <Slot $w={26}><IndentIcon /></Slot>
              </Row>
            </Stack>
            <Stack $top={6}>
              <Divider $h={61} $mx={4} />
            </Stack>
            <Stack $top={7} $gap={7}>
              <Row><Slot $w={36}><WrapIcon /></Slot></Row>
              <Row><Slot $w={36}><MergeIcon /></Slot><Slot $w={12}><Chevron /></Slot></Row>
            </Stack>
          </GroupBody>
          <GroupLabel $launch>Alignment</GroupLabel>
          <LaunchMark />
        </Group>

        <Group $w={162}>
          <GroupBody $pl={9}>
            <Stack $top={7} $gap={7}>
              <Select $w={145}>General<Chevron /></Select>
              <Row>
                <Slot $w={22}><AccountingIcon /></Slot>
                <Slot $w={14}><Chevron size={7} /></Slot>
                <Slot $w={30} $size={17}>%</Slot>
                <Slot $w={24}><CommaIcon /></Slot>
                <Divider $mx={2} />
                <Slot $w={24}><DecimalIcon more /></Slot>
                <Slot $w={26}><DecimalIcon /></Slot>
              </Row>
            </Stack>
          </GroupBody>
          <GroupLabel $launch>Number</GroupLabel>
          <LaunchMark />
        </Group>

        <Group $w={198}>
          <GroupBody $pl={10}>
            <BigButton $w={70} $mr={5}>
              <BigIcon><ConditionalIcon /></BigIcon>
              <BigLine>Conditional</BigLine>
              <BigLine>Formatting<Chevron size={7} /></BigLine>
            </BigButton>
            <BigButton $w={56} $mr={4}>
              <BigIcon><TableIcon /></BigIcon>
              <BigLine>Format as</BigLine>
              <BigLine>Table<Chevron size={7} /></BigLine>
            </BigButton>
            <BigButton $w={42}>
              <BigIcon><CellStyleIcon /></BigIcon>
              <BigLine>Cell</BigLine>
              <BigLine>Styles<Chevron size={7} /></BigLine>
            </BigButton>
          </GroupBody>
          <GroupLabel>Styles</GroupLabel>
        </Group>

        <Group $w={106}>
          <GroupBody $pl={10}>
            <Stack $gap={4}>
              <Row $h={22}><Slot $w={22}><InsertCellsIcon /></Slot><CellLabel $w={45}>Insert</CellLabel><Chevron size={7} /></Row>
              <Row $h={22}><Slot $w={22}><DeleteCellsIcon /></Slot><CellLabel $w={49}>Delete</CellLabel><Chevron size={7} /></Row>
              <Row $h={22}><Slot $w={22}><FormatCellsIcon /></Slot><CellLabel $w={41}>Format</CellLabel><Chevron size={7} /></Row>
            </Stack>
          </GroupBody>
          <GroupLabel>Cells</GroupLabel>
        </Group>

        <Group $w={157}>
          <GroupBody $pl={8}>
            <Stack $gap={4}>
              <Row $h={22}><Slot $w={24} $size={17}>Σ</Slot><Slot $w={22}><Chevron size={7} /></Slot></Row>
              <Row $h={22}><Slot $w={24}><FillDownIcon /></Slot><Slot $w={10}><Chevron size={7} /></Slot></Row>
              <Row $h={22}><Slot $w={24}><EraserIcon /></Slot><Slot $w={10}><Chevron size={7} /></Slot></Row>
            </Stack>
            <BigButton $w={46} $top={3} $ml={1}>
              <BigIcon $h={34}><SortIcon /></BigIcon>
              <BigLine>Sort &amp;</BigLine>
              <BigLine>Filter<Chevron size={7} /></BigLine>
            </BigButton>
            <BigButton $w={46} $top={3}>
              <BigIcon $h={34}><FindIcon /></BigIcon>
              <BigLine>Find &amp;</BigLine>
              <BigLine>Select<Chevron size={7} /></BigLine>
            </BigButton>
          </GroupBody>
          <GroupLabel>Editing</GroupLabel>
        </Group>

        <Group $w={63}>
          <GroupBody $center>
            <BigButton $w={60} $top={3}>
              <BigIcon $h={34}><AddinsIcon /></BigIcon>
              <BigLine>Add-ins</BigLine>
            </BigButton>
          </GroupBody>
          <GroupLabel>Add-ins</GroupLabel>
        </Group>

        <Group $w={62}>
          <GroupBody $center>
            <BigButton $w={60} $top={3}>
              <BigIcon $h={34}><AnalyzeIcon /></BigIcon>
              <BigLine>Analyze</BigLine>
              <BigLine>Data</BigLine>
            </BigButton>
          </GroupBody>
        </Group>

        <RibbonCollapse><Chevron size={12} /></RibbonCollapse>
      </Ribbon>

      <FormulaBar>
        <NameBox>U13<Chevron size={10} /></NameBox>
        <Slot $w={20} $h={26}><MoreVertical size={13} strokeWidth={1.8} color="#ddd" /></Slot>
        <FxBox>
          <Slot $w={23} $h={24}><X size={15} strokeWidth={1} color="#8a8a8a" /></Slot>
          <Slot $w={23} $h={24}><Check size={15} strokeWidth={1} color="#8a8a8a" /></Slot>
          <Slot $w={24} $h={24}><FxGlyph>fx</FxGlyph></Slot>
          <Slot $w={12} $h={24}><Chevron size={9} color="#bbb" /></Slot>
        </FxBox>
        <FormulaInput><Slot $w={20} $h={16}><ChevronUp size={14} strokeWidth={1.3} color="#c8c8c8" /></Slot></FormulaInput>
      </FormulaBar>

      <SheetArea>
        <SheetPane>
          <ColumnRow>
            <Corner />
            {COLS.map((c) => (
              <HeaderCell key={c} $active={c === "U"}>{c}</HeaderCell>
            ))}
          </ColumnRow>
          <SheetBody>
            <RowHeaders>
              {ROWS.map((r) => (
                <RowCell key={r} $active={r === 13}>{r}</RowCell>
              ))}
            </RowHeaders>
            <Canvas>
              <Dashboard>
                <Banner>Bike Sales Dashboard</Banner>
                <DashBody>
                  <SlicerColumn>
                    {SLICERS.map((s) => (
                      <Slicer key={s.title} $w={s.w} $h={s.h} $mt={s.mt} $ml={s.ml} $l={s.l} $r={s.r}>
                        <SlicerHead>
                          {s.title}
                          <SlicerTools><MultiSelectIcon /><ClearFilterIcon /></SlicerTools>
                        </SlicerHead>
                        <SlicerList $top={s.top}>
                          {s.items.map(([name, on]) => (
                            <SlicerItem key={name} $on={on}>{name}</SlicerItem>
                          ))}
                        </SlicerList>
                      </Slicer>
                    ))}
                  </SlicerColumn>
                  <ChartGrid>
                    <IncomeChart />
                    <AgeChart />
                    <CommuteChart />
                  </ChartGrid>
                </DashBody>
              </Dashboard>
              <CellCursor />
            </Canvas>
          </SheetBody>
        </SheetPane>
        <VScroll>
          <Triangle $dir="up" />
          <VThumb />
          <Triangle $dir="down" />
        </VScroll>
      </SheetArea>

      <SheetTabs>
        <Slot $w={32} $h={30}><ChevronLeft size={15} strokeWidth={1.4} color="#ddd" /></Slot>
        <Slot $w={34} $h={30}><ChevronRight size={15} strokeWidth={1.4} color="#aaa" /></Slot>
        <Slot $w={28} $h={30}><MoreHorizontal size={15} strokeWidth={2} color="#ddd" /></Slot>
        <Tab $w={121} $pl={17}>Working Sheet</Tab>
        <TabRule />
        <Tab $w={92} $pl={13}>PivotTable</Tab>
        <TabRule />
        <ActiveTab>Dashboard</ActiveTab>
        <Slot $w={4} $h={4} />
        <TabRule />
        <Slot $w={95} $h={30}><Plus size={15} strokeWidth={1.2} color="#ddd" /></Slot>
        <HScroll>
          <Slot $w={20} $h={20}><MoreVertical size={13} strokeWidth={1.8} color="#ddd" /></Slot>
          <Slot $w={14} $h={12} style={{ marginLeft: 8 }}><Triangle $dir="left" /></Slot>
          <HThumb />
          <Triangle $dir="right" />
          <Slot $w={6} $h={4} />
        </HScroll>
      </SheetTabs>

      <StatusBar>
        Ready
        <Slot $w={18} $h={15} style={{ marginLeft: 15 }}><AccessIcon /></Slot>
        <StatusStrong>Accessibility: Investigate</StatusStrong>
        <ViewButtons>
          <ViewButton $on><ViewIcon kind="normal" /></ViewButton>
          <ViewButton><ViewIcon kind="layout" /></ViewButton>
          <ViewButton><ViewIcon kind="break" /></ViewButton>
          <Slot $w={16} $h={20} style={{ marginLeft: 2 }}><Minus size={11} strokeWidth={1.5} color="#eee" /></Slot>
          <Slot $w={1} $h={4} />
          <ZoomTrack />
          <Slot $w={16} $h={20}><Plus size={11} strokeWidth={1.2} color="#eee" /></Slot>
          <Slot $w={45} $h={20} $size={10.5} $color="#eee">60%</Slot>
        </ViewButtons>
      </StatusBar>

      <Taskbar>
        <Weather>
          <WeatherIcon>
            <CloudIcon />
            <WeatherBadge>1</WeatherBadge>
          </WeatherIcon>
          <TwoLines>
            27°C
            <Dim>Cloudy</Dim>
          </TwoLines>
        </Weather>
        <Slot $w={36} $h={36}><StartIcon /></Slot>
        <TaskSearch>
          <Search size={15} strokeWidth={1.6} color="#e0e0e0" />
          Search
        </TaskSearch>
        <Apps>
          <AppSlot><TaskViewIcon /></AppSlot>
          <AppSlot><DesktopIcon /></AppSlot>
          <AppSlot $dot><FolderIcon /></AppSlot>
          <AppSlot><YoutubeIcon /></AppSlot>
          <AppSlot><SpotifyIcon /></AppSlot>
          <AppSlot $dot><ChromeIcon /></AppSlot>
          <AppSlot><BraveIcon /></AppSlot>
          <AppSlot $dot><GearIcon /></AppSlot>
          <AppSlot $open><ExcelLogo size={26} /></AppSlot>
        </Apps>
        <Tray>
          <Slot $w={32} $h={30}><ChevronUp size={16} strokeWidth={1.6} color="#eee" /></Slot>
          <Slot $w={32} $h={30}><TrayCloud /></Slot>
          <Slot $w={44} $h={34}><TwoLines $align="center">ENG<div>IN</div></TwoLines></Slot>
          <Slot $w={4} $h={4} />
          <Slot $w={24} $h={30}><Wifi size={16} strokeWidth={1.3} color="#eee" /></Slot>
          <Slot $w={24} $h={30}><Volume2 size={16} strokeWidth={1.3} color="#eee" /></Slot>
          <Slot $w={22} $h={30}><BatteryLeaf /></Slot>
          <TwoLines $align="right" $w={77}>22:10<div>25-06-2025</div></TwoLines>
        </Tray>
      </Taskbar>
    </Page>
  );
}
